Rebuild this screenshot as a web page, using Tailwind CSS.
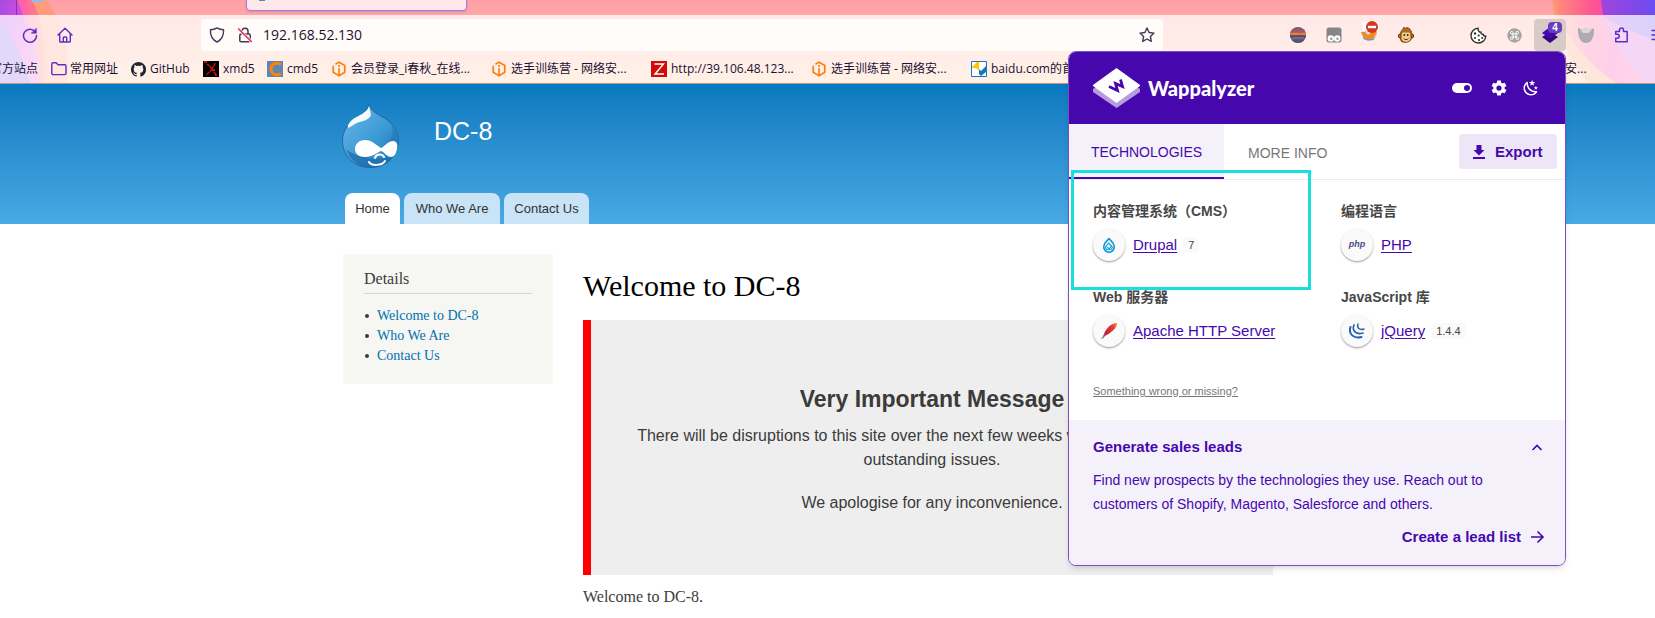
<!DOCTYPE html>
<html lang="zh-CN">
<head>
<meta charset="utf-8">
<title>DC-8</title>
<script src="https://cdn.jsdelivr.net/npm/@tailwindcss/browser@4"></script>
</head>
<body class="relative min-h-screen overflow-hidden bg-white font-['Liberation_Sans','Noto_Sans_CJK_SC',sans-serif] text-[#3b3b3b]">
<svg class="hidden" aria-hidden="true">
  <symbol id="hex" viewBox="0 0 16 16"><g fill="none" stroke="#ff7f0e" stroke-width="1.7"><path d="M4.5 3.200 8 1.200l5.800 3.300v6.800L8 14.700l-5.800-3.400V4.800"/><path d="M8 7v7.500"/></g><circle cx="8" cy="5" r="1.100" fill="#ff7f0e"/></symbol>
</svg>

<!-- Browser chrome -->
<header class="relative overflow-hidden border-b border-[#bd9787] bg-gradient-to-b from-[#ff9fa8] to-[#ffc69c] font-['Open_Sans','Noto_Sans_CJK_SC',sans-serif] text-[#1d1133]">
  <svg class="absolute left-0 top-0" width="80" height="84" viewBox="0 0 80 84" aria-hidden="true">
    <defs>
      <linearGradient id="la" x1="0" x2="1" y1="0" y2="0"><stop offset="0" stop-color="#ff4fc8"/><stop offset=".5" stop-color="#ff62a8"/><stop offset="1" stop-color="#ff8a78"/></linearGradient>
      <linearGradient id="lb" x1="0" x2="1" y1="0" y2="1"><stop offset="0" stop-color="#a24be0"/><stop offset=".5" stop-color="#e34fe4"/><stop offset="1" stop-color="#f07adf"/></linearGradient>
    </defs>
    <path d="M0 0h46c16 20 23 50 22 84H0z" fill="#ff9b7c"/>
    <path d="M0 0h32c12 22 14 50 12 84H0z" fill="url(#la)"/>
    <path d="M0 0h17l8 20c10 20 14 40 14 64H0z" fill="url(#lb)"/>
    <path d="M0 22c14 16 24 36 30 62H0z" fill="#8d68ea"/>
  </svg>
  <svg class="absolute right-0 top-0" width="120" height="84" viewBox="0 0 120 84" aria-hidden="true">
    <defs>
      <linearGradient id="ra" x1="0" x2="1" y1="0" y2="0"><stop offset="0" stop-color="#ff9478"/><stop offset=".35" stop-color="#ff5a8e"/><stop offset=".6" stop-color="#ff3fb0"/><stop offset="1" stop-color="#ff6a9c"/></linearGradient>
      <linearGradient id="rb" x1="0" x2="1" y1="0" y2="0"><stop offset="0" stop-color="#a044dd"/><stop offset="1" stop-color="#6c4cf0"/></linearGradient>
    </defs>
    <path d="M17 0h103v84H54C33 60 21 30 17 0z" fill="#ff9b72"/>
    <path d="M18 0h102v84H82C50 62 26 32 18 0z" fill="url(#ra)"/>
    <path d="M66 0h54v84h-8C86 60 69 30 66 0z" fill="#d95bd6"/>
    <path d="M66 0h54v40C104 34 76 24 68 15z" fill="url(#rb)"/>
  </svg>

  <div class="relative h-[15px]">
    <div class="absolute left-4 top-0 h-full w-px bg-[#8b35a8]"></div>
    <div class="absolute left-[31px] top-0 h-[2px] w-3 rounded-b bg-[#8bc0ea]"></div>
    <div class="absolute -top-5 left-[246px] h-[31px] w-[221px] rounded-b border border-[#a873fb] bg-[#ffe8ea] shadow"></div>
    <div class="absolute left-[259px] top-0 h-px w-[6px] bg-[#5a86a8]"></div>
  </div>

  <div class="relative bg-white/75">
    <div class="flex items-center pt-1">
      <button aria-label="刷新" class="ml-[14px] flex size-8 items-center justify-center text-[#5b2ec4]"><svg width="16" height="16" viewBox="0 0 16 16" fill="none" stroke="currentColor" stroke-width="1.500" stroke-linecap="round"><path d="M13 4.500A6.500 6.500 0 1 0 14.500 8.500"/><path d="M14.300 1.500v4.700H9.600z" fill="currentColor" stroke-width="0.600"/></svg></button>
      <button aria-label="主页" class="ml-[3px] flex size-8 items-center justify-center text-[#5b2ec4]"><svg width="16" height="16" viewBox="0 0 16 16" fill="none" stroke="currentColor" stroke-width="1.400" stroke-linecap="round" stroke-linejoin="round"><path d="M1 8 8 1.200 15 8M2.700 6.800v7.400c0 .5.300.8.800.8h9c.5 0 .8-.3.800-.8V6.800M6.300 15v-4.200c0-.5.300-.8.800-.8h1.800c.5 0 .8.300.8.800V15"/></svg></button>
      <div class="ml-[120px] flex h-8 w-0 max-w-[962px] flex-auto items-center rounded bg-[#fffcf9] pl-2 pr-2">
        <svg width="16" height="16" viewBox="0 0 16 16" fill="none" stroke="#41395a" stroke-width="1.400" stroke-linejoin="round"><path d="M8 .9c2 1.300 4.300 1.800 6.600 1.900.2 5.700-1.600 9.800-6.600 12.300C3 12.600 1.200 8.500 1.400 2.800 3.700 2.700 6 2.200 8 .9z"/></svg>
        <svg class="ml-3" width="16" height="16" viewBox="0 0 16 16" fill="none" stroke="#41395a" stroke-width="1.500"><rect x="2.800" y="7" width="10.400" height="7.800" rx="1.300"/><path d="M5 7V4.200a3 3 0 0 1 6 0V7"/><path d="M1.200 1.500 14.800 15" stroke="#fffcf9" stroke-width="3"/><path d="M1.200 1.500 14.800 15" stroke="#e8264f"/></svg>
        <input aria-label="地址栏" value="192.168.52.130" class="ml-[10px] w-0 flex-1 bg-transparent text-sm outline-none">
        <button aria-label="收藏"><svg width="16" height="16" viewBox="0 0 16 16" fill="none" stroke="#41395a" stroke-width="1.400" stroke-linejoin="round"><path d="m8 1 2.100 4.500 4.900.6-3.600 3.400.9 4.900L8 12l-4.300 2.400.9-4.900L1 6.100l4.900-.6z"/></svg></button>
      </div>
      <div class="ml-auto -mr-[19px] flex shrink-0 items-center gap-1">
        <button aria-label="扩展" class="flex size-8 items-center justify-center"><svg width="16" height="16" viewBox="0 0 16 16"><clipPath id="cs"><circle cx="8" cy="8" r="8"/></clipPath><g clip-path="url(#cs)"><path fill="#6a5d88" d="M0 0h16v16H0z"/><path fill="#a75a5a" d="M0 3l16-1v5H0z"/><path fill="#ef7a3a" d="M0 6c5-1 10 1 16-1v3H0z"/><path fill="#4a5474" d="M0 8h16v3H0z"/><path fill="#8d6078" d="M2 10h12v2H2z"/><path fill="#4c5678" d="M0 12.500h16V16H0z"/></g></svg></button>
        <button aria-label="扩展" class="flex size-8 items-center justify-center"><svg width="16" height="16" viewBox="0 0 16 16"><rect x=".5" y=".5" width="15" height="15" rx="2.500" fill="#858585"/><circle cx="4.800" cy="11.500" r="3.200" fill="#fff"/><circle cx="11.200" cy="11.500" r="3.200" fill="#fff"/><circle cx="5.300" cy="11.800" r="1.200" fill="#999"/><circle cx="11.500" cy="11.800" r="1.200" fill="#999"/></svg></button>
        <button aria-label="扩展" class="flex size-8 items-start justify-center pt-[2px]"><svg width="22" height="22" viewBox="0 0 22 22"><path fill="#fff" d="M4 1h16v11H4z"/><path d="M3 11c3-2 11-3 15-1 1 5-2 10-7 10-4 0-8-4-8-9z" fill="#dcd8d2"/><path d="M2 11h4l3 3 6-4 3 1-3 6-6 2-5-3z" fill="#f08a24"/><path d="m4 17 5 2 6-1" stroke="#7f98a4" stroke-width="1.500" fill="none"/><circle cx="13" cy="6" r="6" fill="#d8351e"/><path fill="#fff" d="M9 4.800h8v2.400H9z"/></svg></button>
        <button aria-label="扩展" class="flex size-8 items-center justify-center"><svg width="16" height="16" viewBox="0 0 16 16"><circle cx="2.300" cy="9" r="2" fill="#d98d32" stroke="#5b3410"/><circle cx="13.700" cy="9" r="2" fill="#d98d32" stroke="#5b3410"/><path d="M3 14C1 8 3 3 5 2l1-2 1 1.500L9 .5c5 1 6 8 4 12-1 3-8 4-10 1.500z" fill="#b06a20" stroke="#5b3410" stroke-width=".7"/><path d="M8 6C5 4 3 7 4 9c-1.500 3 1 5.700 4 5.700s5.500-2.700 4-5.700C13 7 11 4 8 6z" fill="#f5cf8c"/><circle cx="6.300" cy="8" r=".9" fill="#222"/><circle cx="9.700" cy="8" r=".9" fill="#222"/><path d="M5.500 11.300c1.500 1.800 3.500 1.800 5 0" stroke="#5b3410" fill="none"/></svg></button>
        <div class="w-8"></div>
        <button aria-label="扩展" class="flex size-8 items-center justify-center"><svg width="17" height="17" viewBox="0 0 17 17" fill="none" stroke="#333" stroke-width="1.400"><path d="M8 1.200a7.400 7.400 0 1 0 7.800 8c-1.800.2-2.600-.5-2.800-2-1.500.2-2.200-.6-2-2-1.800 0-3-1.600-3-4z" fill="#fff"/><g fill="#333" stroke="none"><circle cx="5" cy="6.500" r="1.200"/><circle cx="8.700" cy="8.500" r="1.100"/><circle cx="5" cy="11" r="1.100"/><circle cx="9" cy="13" r="1.100"/><circle cx="12.200" cy="11" r="1"/></g></svg></button>
        <button aria-label="扩展" class="flex size-8 items-center justify-center"><svg width="15" height="15" viewBox="0 0 15 15"><circle cx="7.500" cy="7.500" r="7.200" fill="#a6a3a2"/><path d="M6 6V4.700A1.300 1.300 0 1 0 4.700 6h5.600A1.300 1.300 0 1 0 9 4.700v5.600A1.300 1.300 0 1 0 10.300 9H4.700A1.300 1.300 0 1 0 6 10.300z" fill="none" stroke="#fff" stroke-width="1"/></svg></button>
        <button aria-label="Wappalyzer" class="relative flex size-8 items-center justify-center rounded bg-[#d7cac7]"><svg width="16" height="16" viewBox="0 0 16 16"><path d="m0 10 8-5 8 5-8 6z" fill="#320785"/><path d="m0 6 8-6 8 6-8 5.500z" fill="#4608ad"/></svg><span class="absolute right-1 top-[3px] w-[14px] rounded-sm bg-[#6a3cc0] font-['Liberation_Sans',sans-serif] text-[10px] font-bold leading-[11px] text-white">4</span></button>
        <button aria-label="扩展" class="flex size-8 items-center justify-center"><svg width="16" height="16" viewBox="0 0 16 16"><path d="M0 1c1.500 0 2.500 1 3 2 2-2 8-2 10 0 1-1 2-2 3-1 0 3 0 6-1 8-1 3-3 6-7 6s-6-3-7-6C0 7 0 4 0 1z" fill="#aeaaaf"/><path d="M3 4c1-3 8-4 10-1-1 3-3 3-5 3S4 6 3 4z" fill="#dcd8de"/></svg></button>
        <button aria-label="扩展程序" class="flex size-8 items-center justify-center"><svg width="16" height="16" viewBox="0 0 16 16" fill="none" stroke="#5b2ec4" stroke-width="1.500" stroke-linejoin="round"><path d="M5.500 4.500V3a2 2 0 0 1 4 0v1.500h3.700v10.300H1.700v-3.500h1.500a2 2 0 0 0 0-4H1.700V4.500z"/></svg></button>
        <button aria-label="菜单" class="flex size-8 items-center justify-center"><svg width="16" height="16" viewBox="0 0 16 16" stroke="#5b2ec4" stroke-width="1.400" stroke-linecap="round"><path d="M2 3.500h13M2 8h13M2 12.500h13"/></svg></button>
      </div>
    </div>

    <nav aria-label="书签" class="flex h-8 items-center whitespace-nowrap pt-1 text-xs">
      <a href="#" class="-ml-[10px] w-[61px] shrink-0">官方站点</a>
      <a href="#" class="flex w-20 shrink-0 items-center gap-[3px]"><svg width="16" height="16" viewBox="0 0 16 16" fill="none" stroke="#5b2ec4" stroke-width="1.400" stroke-linejoin="round"><path d="M.8 3c0-.8.500-1.300 1.300-1.300h3L7 3.700h6.700c.8 0 1.300.5 1.300 1.300v7.300c0 .8-.5 1.300-1.300 1.300H2.100c-.8 0-1.300-.5-1.300-1.300z"/></svg>常用网址</a>
      <a href="#" class="flex w-[72px] shrink-0 items-center gap-1"><svg width="15" height="15" viewBox="0 0 16 16" fill="#1f2430"><path d="M8 0a8 8 0 0 0-2.530 15.590c.4.070.550-.170.550-.380v-1.490c-2.230.480-2.700-.94-2.700-.94-.36-.92-.89-1.170-.89-1.170-.73-.5.050-.49.050-.49.810.060 1.230.830 1.230.830.720 1.230 1.880.870 2.340.670.070-.52.280-.87.510-1.070-1.780-.2-3.650-.89-3.650-3.950 0-.87.310-1.590.820-2.150-.08-.2-.36-1.020.080-2.120 0 0 .67-.22 2.200.820a7.600 7.600 0 0 1 4 0c1.530-1.040 2.200-.82 2.200-.82.440 1.100.160 1.920.080 2.120.510.560.820 1.270.820 2.150 0 3.070-1.870 3.750-3.650 3.950.290.250.540.730.540 1.480v2.190c0 .21.150.460.550.380A8 8 0 0 0 8 0z"/></svg>GitHub</a>
      <a href="#" class="flex w-16 shrink-0 items-center gap-1"><svg width="16" height="16" viewBox="0 0 16 16"><path d="M0 0h16v16H0z"/><path d="M4 3c3 2 6 6 9 11M12 2c-1 4-5 9-9 12M1 1h3M12 14h2M9 9h3" stroke="#f00f0f" stroke-width="1.300" fill="none" stroke-dasharray="3 .6"/></svg>xmd5</a>
      <a href="#" class="flex w-16 shrink-0 items-center gap-1"><svg width="16" height="16" viewBox="0 0 16 16"><path fill="#5c87b4" d="M0 0h16v16H0z"/><path d="M14 3.500C9 .5 4 3 4 8s5 7.500 10 4.500" fill="none" stroke="#ff8208" stroke-width="3"/></svg>cmd5</a>
      <a href="#" class="flex w-40 shrink-0 items-center gap-1"><svg width="16" height="16"><use href="#hex"/></svg>会员登录_i春秋_在线...</a>
      <a href="#" class="flex w-40 shrink-0 items-center gap-1"><svg width="16" height="16"><use href="#hex"/></svg>选手训练营 - 网络安...</a>
      <a href="#" class="flex w-40 shrink-0 items-center gap-1"><svg width="16" height="16" viewBox="0 0 16 16"><path fill="#d40a0a" d="M0 0h16v16H0z"/><path d="M3.500 3h9L4 13h9" fill="none" stroke="#fff" stroke-width="1.400"/></svg>http://39.106.48.123...</a>
      <a href="#" class="flex w-40 shrink-0 items-center gap-1"><svg width="16" height="16"><use href="#hex"/></svg>选手训练营 - 网络安...</a>
      <a href="#" class="flex w-[480px] shrink-0 items-center gap-1"><svg width="16" height="16" viewBox="0 0 16 16"><path fill="#fff" stroke="#1478c0" d="M.5.500h15v15H.5z"/><path d="M1 6 6 1h2v8L4 7H1z" fill="#ffc40c"/><path d="m15 5-5 5-2-2v5l2 2 5-4z" fill="#1478c0"/></svg>baidu.com的首页</a>
      <a href="#" class="flex w-40 shrink-0 items-center gap-1"><svg width="16" height="16"><use href="#hex"/></svg>选手训练营 - 网络安...</a>
    </nav>
  </div>
</header>

<!-- Site banner -->
<div class="bg-gradient-to-b from-[#0779bf] to-[#48a9e4] pr-[39px]">
  <div class="mx-auto flex max-w-[960px] flex-col">
    <div class="flex items-start gap-[35px] pl-[14px] pt-5">
      <svg width="57" height="64" viewBox="0 0 57 64">
        <defs><linearGradient id="dr" x1="0" x2="1" y1="0" y2="1"><stop offset="0" stop-color="#6bb9ea"/><stop offset=".55" stop-color="#3d9bd6"/><stop offset="1" stop-color="#1b6fae"/></linearGradient></defs>
        <path d="M27 0c2 8 9 10 17 15 8 6 12.500 13 12.500 21 0 15-12 27.500-28 27.500S.5 52 .5 37c0-11 6.500-18 13.500-23C20 10 25 8 27 0z" fill="url(#dr)" stroke="#27699d" stroke-width="1"/>
        <path d="M50 22c3 10-4 18-12 22 9 3 16 0 18-8 0-5-2-10-6-14z" fill="#2379b5" opacity=".65"/>
        <path d="M4 45c8 8 38 14 48 6-4 8-13 13-23 13S8 57 4 45z" fill="#1d6ba8" opacity=".7"/>
        <path d="M27 2c1 6 3 8 1 11-3 4-10 4-15 7-5 3-8 6-7 1 4-7 9-8 14-11 4-3 6-4 7-8z" fill="#fff" opacity=".95"/>
        <path d="M13 45c0-5 4-9 10-9 7 0 11 5 16 8 4-2 7-7 12-7 4 0 5 4 4 8-1 5-3 8-6 8-4 0-7-5-10-6-4 2-9 6-16 6-6 0-10-3-10-8z" fill="#fff"/>
        <path d="M33 54c1-4 7-5 9-1M27 58c2 4 13 4 16-1" fill="none" stroke="#fff" stroke-width="2" stroke-linecap="round"/>
      </svg>
      <a href="#" class="text-[25px] leading-[54px] text-white">DC-8</a>
    </div>
    <nav class="mt-[25px] flex gap-1 pl-[17px] text-center text-[13px] leading-[31px] text-[#333]">
      <a href="#" class="min-w-[55px] rounded-t-lg bg-white px-2">Home</a>
      <a href="#" class="min-w-24 rounded-t-lg bg-[#c8e4f6] px-2">Who We Are</a>
      <a href="#" class="min-w-[85px] rounded-t-lg bg-[#c8e4f6] px-2">Contact Us</a>
    </nav>
  </div>
</div>

<!-- Site content -->
<div class="pr-[39px]">
  <div class="mx-auto flex max-w-[960px] items-start gap-[30px] px-[15px] font-['Liberation_Serif',serif]">
    <aside class="mt-[30px] w-[210px] shrink-0 border border-[#f9f9f7] bg-[#f6f6f2] px-5 pb-[17px] pt-[14px]">
      <h2 class="border-b border-[#d3d7cf] pb-1 text-base leading-5">Details</h2>
      <ul class="mt-3 text-sm leading-5 text-[#0071b3]">
        <li class="flex items-center gap-2 pl-[1px]"><span class="size-1 rounded-full bg-[#3b3b3b]"></span><a href="#">Welcome to DC-8</a></li>
        <li class="flex items-center gap-2 pl-[1px]"><span class="size-1 rounded-full bg-[#3b3b3b]"></span><a href="#">Who We Are</a></li>
        <li class="flex items-center gap-2 pl-[1px]"><span class="size-1 rounded-full bg-[#3b3b3b]"></span><a href="#">Contact Us</a></li>
      </ul>
    </aside>
    <main class="min-w-0 flex-1 pt-[44px]">
      <h1 class="text-[30px] leading-9 text-black">Welcome to DC-8</h1>
      <section class="mt-4 border-l-8 border-[#f00] bg-[#eee] px-10 pb-[60px] pt-[63px] text-center font-['Liberation_Sans',sans-serif] leading-6">
        <h2 class="text-[23px] font-bold leading-8">Very Important Message</h2>
        <p class="mt-[9px]">There will be disruptions to this site over the next few weeks while we resolve a few outstanding issues.</p>
        <p class="mt-[19px]">We apologise for any inconvenience.</p>
      </section>
      <p class="mt-[10px] leading-6">Welcome to DC-8.</p>
    </main>
  </div>
</div>

<!-- Wappalyzer popup -->
<div class="absolute right-[89px] top-[51px] w-[498px] overflow-hidden rounded-lg border border-[#7c4fc6] bg-white text-[#4608ad] shadow-md">
  <div class="flex h-[72px] items-center bg-[#4608ad] pl-6 pr-[25px] text-white">
    <svg width="47" height="40" viewBox="0 0 47 40"><path d="M0 21 23.500 5 47 21v3L23.500 40 0 24z" fill="#b59cde"/><path d="M23.500 0 47 17v1L23.500 35 0 18v-1z" fill="#fff"/><path d="M16 18.500 24.500 22.500 22.500 15.500 29.500 18.500 27.500 11.500" fill="none" stroke="#4608ad" stroke-width="2.800" stroke-linejoin="miter"/></svg>
    <span class="ml-2 font-['Lato',sans-serif] text-[20px] font-black leading-6">Wappalyzer</span>
    <button aria-label="开关" class="ml-auto"><svg width="20" height="10" viewBox="0 0 20 10"><rect width="20" height="10" rx="5" fill="#fff"/><circle cx="15" cy="5" r="3" fill="#4608ad"/></svg></button>
    <button aria-label="设置" class="ml-[18px]"><svg width="18" height="18" viewBox="0 0 24 24" fill="#fff"><path d="M12 15.500A3.500 3.500 0 0 1 8.500 12 3.500 3.500 0 0 1 12 8.500a3.500 3.500 0 0 1 3.500 3.500 3.500 3.500 0 0 1-3.500 3.500m7.430-2.530c.04-.32.070-.64.070-.97s-.03-.66-.07-1l2.110-1.630c.19-.15.240-.42.120-.64l-2-3.460c-.12-.22-.39-.31-.61-.22l-2.490 1c-.52-.39-1.060-.73-1.690-.98l-.37-2.650A.506.506 0 0 0 14 2h-4c-.25 0-.46.180-.5.420l-.37 2.650c-.63.250-1.170.590-1.690.98l-2.490-1c-.22-.09-.49 0-.61.220l-2 3.460c-.13.220-.07.490.120.640L4.570 11c-.04.340-.07.670-.07 1s.03.650.070.970l-2.110 1.660c-.19.150-.25.420-.12.640l2 3.460c.12.220.39.300.61.220l2.490-1.010c.52.400 1.060.740 1.690.990l.37 2.650c.04.240.25.420.5.420h4c.25 0 .46-.18.5-.42l.37-2.650c.63-.26 1.170-.59 1.690-.99l2.490 1.010c.22.080.49 0 .61-.22l2-3.460c.12-.22.070-.49-.12-.64z"/></svg></button>
    <button aria-label="深色模式" class="ml-[14px]"><svg width="18" height="18" viewBox="0 0 24 24" fill="#fff"><path d="m17.750 4.090-2.530 1.940.91 3.060-2.630-1.810-2.630 1.810.91-3.060-2.530-1.940L12.440 4l1.060-3 1.060 3zm3.500 6.910-1.640 1.250.59 1.980-1.700-1.170-1.700 1.170.59-1.980L15.750 11l2.060-.05L18.500 9l.69 1.950zm-2.280 4.950c.83-.08 1.720 1.100 1.190 1.850-.32.450-.66.870-1.080 1.270C15.170 23 8.840 23 4.940 19.070c-3.910-3.900-3.910-10.240 0-14.140.4-.4.820-.76 1.270-1.080.75-.53 1.930.36 1.850 1.190-.27 2.860.69 5.830 2.890 8.020a9.960 9.960 0 0 0 8.020 2.890m-1.640 2.020a12.080 12.080 0 0 1-7.800-3.470c-2.170-2.190-3.330-5-3.490-7.820-2.810 3.140-2.700 7.960.31 10.980 3.020 3.010 7.840 3.120 10.980.31"/></svg></button>
  </div>
  <div class="flex h-14 items-stretch border-b border-[#ebebeb] text-sm">
    <button class="w-[155px] border-b-2 border-[#4608ad] bg-[#f4f1fa] pt-[2px]">TECHNOLOGIES</button>
    <button class="px-6 pt-[2px] text-[#777]">MORE INFO</button>
    <button class="ml-auto mr-2 flex h-[35px] w-[98px] items-center gap-2 self-center rounded bg-[#ece6f7] pl-3 text-[15px] font-bold"><svg width="16" height="16" viewBox="0 0 16 16" fill="currentColor"><path d="M5.500 1h5v5h3L8 11.500 2.500 6h3zM2 13h12v2H2z"/></svg>Export</button>
  </div>
  <div class="grid grid-cols-2 gap-y-[26px] pt-[21px] text-[15px]">
    <section class="px-6">
      <h3 class="text-sm font-bold leading-5 text-[#474747]">内容管理系统（CMS）</h3>
      <div class="mt-2 flex items-center gap-2">
        <span class="flex size-8 items-center justify-center rounded-full bg-[#fafafa] shadow-[0_1px_2px_rgba(0,0,0,0.4)]"><svg width="16" height="16" viewBox="0 0 16 16" fill="none" stroke="#0f9bdb"><path d="M8 1.300C7.500 3.500 2.700 5 2.700 9.800a5.300 5.300 0 0 0 10.600 0C13.300 5 8.500 3.500 8 1.300z" stroke-width="1.700"/><path d="M8 5.500 5.300 9a2 2 0 1 0 3 2.600L10.500 9M8 6.500l2.500 2.500a1.900 1.900 0 1 1-2.700 2.600L6.500 10" stroke-width="1.100"/></svg></span>
        <a href="#" class="underline underline-offset-2">Drupal</a><span class="-ml-[2px] rounded bg-[#fafafa] px-[5px] text-[11px] leading-4 text-[#444]">7</span>
      </div>
    </section>
    <section class="px-6">
      <h3 class="text-sm font-bold leading-5 text-[#474747]">编程语言</h3>
      <div class="mt-2 flex items-center gap-2">
        <span class="flex size-8 items-center justify-center rounded-full bg-[#fafafa] text-[9px] font-bold italic text-[#484c89] shadow-[0_1px_2px_rgba(0,0,0,0.4)]">php</span>
        <a href="#" class="underline underline-offset-2">PHP</a>
      </div>
    </section>
    <section class="px-6">
      <h3 class="text-sm font-bold leading-5 text-[#474747]">Web 服务器</h3>
      <div class="mt-2 flex items-center gap-2">
        <span class="flex size-8 items-center justify-center rounded-full bg-[#fafafa] shadow-[0_1px_2px_rgba(0,0,0,0.4)]"><svg width="18" height="18" viewBox="0 0 18 18"><defs><linearGradient id="ap" x1="0" x2="1" y1="1" y2="0"><stop offset="0" stop-color="#8b2078"/><stop offset=".35" stop-color="#c82035"/><stop offset=".75" stop-color="#e0403a"/><stop offset="1" stop-color="#f69923"/></linearGradient></defs><path d="M17 1c0 4-3 7-6 9-2 2-4 2.500-6 4l-3 3 1.500-3.500C5 8 10 1 17 1z" fill="url(#ap)"/><path d="M1.500 17 5 12" stroke="#9b6fa0" stroke-width=".8"/></svg></span>
        <a href="#" class="underline underline-offset-2">Apache HTTP Server</a>
      </div>
    </section>
    <section class="px-6">
      <h3 class="text-sm font-bold leading-5 text-[#474747]">JavaScript 库</h3>
      <div class="mt-2 flex items-center gap-2">
        <span class="flex size-8 items-center justify-center rounded-full bg-[#fafafa] shadow-[0_1px_2px_rgba(0,0,0,0.4)]"><svg width="16" height="16" viewBox="0 0 16 16" fill="none" stroke="#2565ae" stroke-linecap="round"><path d="M1.500 4C-1 11 5 16 12.500 14" stroke-width="2"/><path d="M5 2c-2.500 6 2.500 10 9 8" stroke-width="1.700"/><path d="M9 1c-1.500 4 1.500 6.500 6 5" stroke-width="1.400"/></svg></span>
        <a href="#" class="underline underline-offset-2">jQuery</a><span class="-ml-[2px] rounded bg-[#fafafa] px-[5px] text-[11px] leading-4 text-[#444]">1.4.4</span>
      </div>
    </section>
  </div>
  <div class="px-6 pb-[21px] pt-9 text-[11px] leading-4"><a href="#" class="text-[#777] underline">Something wrong or missing?</a></div>
  <section class="bg-[#f4f1fa] px-6 pb-[18px] pt-[17px]">
    <div class="flex items-center justify-between text-[15px] font-bold leading-5">
      <h3>Generate sales leads</h3>
      <button aria-label="收起" class="-mr-1"><svg width="16" height="16" viewBox="0 0 16 16" fill="none" stroke="currentColor" stroke-width="1.700"><path d="m3.500 11 4.500-4.500 4.500 4.500"/></svg></button>
    </div>
    <p class="mt-[11px] text-sm leading-6">Find new prospects by the technologies they use. Reach out to customers of Shopify, Magento, Salesforce and others.</p>
    <a href="#" class="-mr-1 mt-[11px] flex items-center justify-end gap-2 text-[15px] font-bold leading-5">Create a lead list<svg width="16" height="16" viewBox="0 0 16 16" fill="none" stroke="currentColor" stroke-width="1.600"><path d="M2 8h12M8.500 2.500 14 8l-5.500 5.500"/></svg></a>
  </section>
</div>

<!-- Highlight frame over the CMS entry -->
<div class="pointer-events-none absolute right-[344px] top-[170px] h-[120px] w-[240px] border-[3px] border-[#18dede]"></div>
</body>
</html>
